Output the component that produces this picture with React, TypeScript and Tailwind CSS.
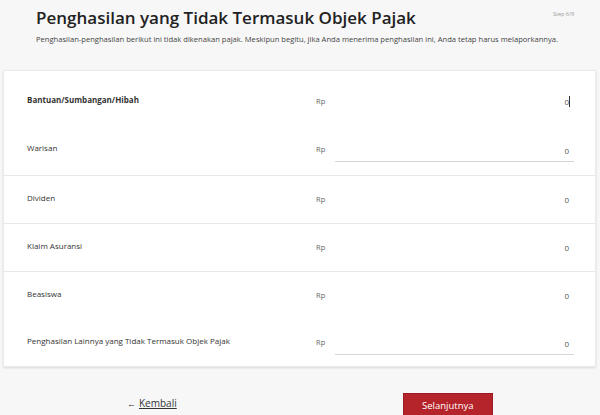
import React from 'react';

interface IncomeRow {
  label: string;
  bold?: boolean;
  underline?: boolean;
  focused?: boolean;
}

const groups: IncomeRow[][] = [
  [
    { label: 'Bantuan/Sumbangan/Hibah', bold: true, focused: true },
    { label: 'Warisan', underline: true },
  ],
  [{ label: 'Dividen' }],
  [{ label: 'Klaim Asuransi' }],
  [
    { label: 'Beasiswa' },
    { label: 'Penghasilan Lainnya yang Tidak Termasuk Objek Pajak', underline: true },
  ],
];

const Row: React.FC<{ row: IncomeRow; tall?: boolean }> = ({ row, tall }) => (
  <div className={`flex items-center ${tall ? 'h-[48px]' : 'h-[47px]'}`}>
    <div
      className={`w-[312px] pl-[23px] mb-[3px] text-[8px] text-[#333] ${row.bold ? 'font-bold' : ''}`}
    >
      {row.label}
    </div>
    <div className="w-[16px] text-[7.5px] text-[#666] pt-[1px]">Rp</div>
    <div
      className={`ml-[3px] w-[239px] h-[22px] flex items-center justify-end pr-[5px] pt-[1px] text-[8px] text-[#555] ${
        row.underline ? 'border-b border-[#d6d6d6] mt-[3px]' : ''
      }`}
    >
      <span className="relative">
        0
        {row.focused && (
          <span className="absolute right-[-1px] top-[0px] h-[11px] w-px bg-[#333]" />
        )}
      </span>
    </div>
  </div>
);

const App: React.FC = () => {
  return (
    <div
      className="w-[600px] h-[415px] overflow-hidden bg-[#f7f7f7]"
      style={{ fontFamily: '"Open Sans", "Liberation Sans", sans-serif' }}
    >
      <div className="relative pl-[36px] pt-[5px] h-[70px]">
        <h1 className="text-[17px] font-semibold text-[#222] leading-[26px]">
          Penghasilan yang Tidak Termasuk Objek Pajak
        </h1>
        <p className="mt-[2px] text-[7.6px] text-[#444] leading-[12px]">
          Penghasilan-penghasilan berikut ini tidak dikenakan pajak. Meskipun begitu, jika Anda menerima penghasilan ini, Anda tetap harus melaporkannya.
        </p>
        <span className="absolute left-[553px] top-[10px] text-[5.5px] text-[#999]">Step 6/9</span>
      </div>

      <div className="ml-[3px] mr-[4px] bg-white shadow-[0_1px_2px_rgba(0,0,0,0.12)] border border-[#eaeaea]">
        {groups.map((group, gi) => (
          <div
            key={gi}
            className={`${gi > 0 ? 'border-t border-[#e8e8e8]' : 'pt-[6px] pb-[2px]'}`}
          >
            {group.map((row) => (
              <Row key={row.label} row={row} tall={gi === 0} />
            ))}
          </div>
        ))}
      </div>

      <div className="flex items-start mt-[26px]">
        <a className="ml-[127px] mt-[3px] flex items-center text-[10px] text-[#333]">
          <span className="mr-[3px] text-[9px] font-bold">←</span>
          <span className="underline">Kembali</span>
        </a>
        <button className="ml-[226px] w-[90px] h-[26px] bg-[#b5232b] text-white text-[9.5px] border border-[#9a1c22]">
          Selanjutnya
        </button>
      </div>
    </div>
  );
};

export default App;
